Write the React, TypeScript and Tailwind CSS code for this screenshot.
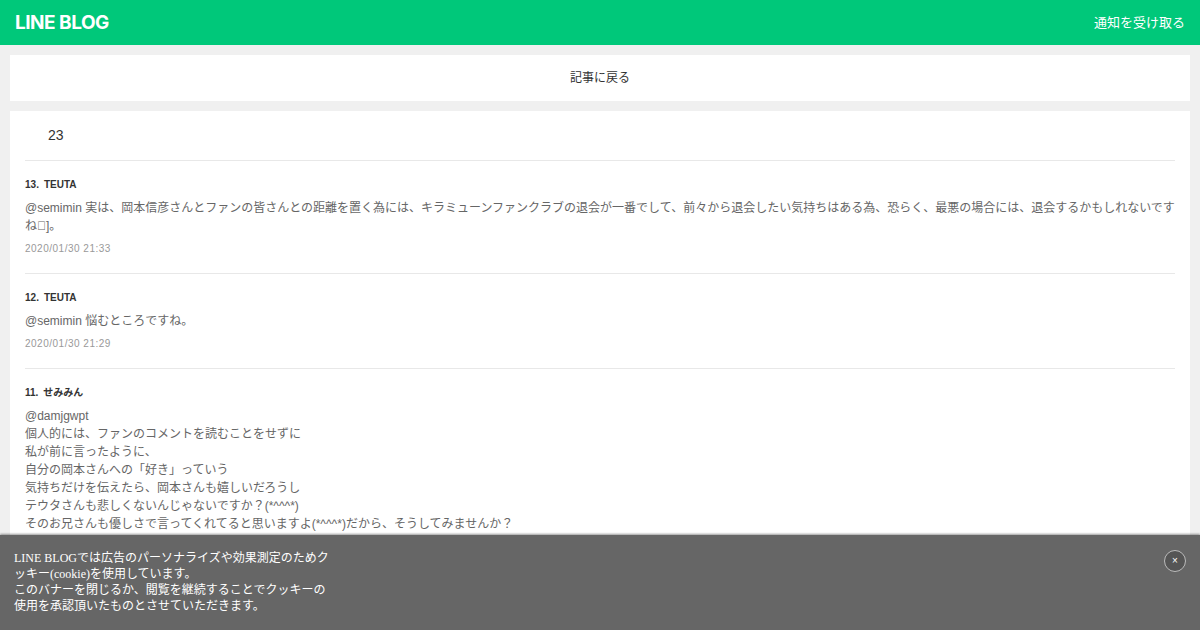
const comments = [
  {
    no: 13,
    name: "TEUTA",
    lines: ["@semimin 実は、岡本信彦さんとファンの皆さんとの距離を置く為には、キラミューンファンクラブの退会が一番でして、前々から退会したい気持ちはある為、恐らく、最悪の場合には、退会するかもしれないですね\u{F0000}]。"],
    date: "2020/01/30 21:33",
  },
  {
    no: 12,
    name: "TEUTA",
    lines: ["@semimin 悩むところですね。"],
    date: "2020/01/30 21:29",
  },
  {
    no: 11,
    name: "せみみん",
    lines: [
      "@damjgwpt",
      "個人的には、ファンのコメントを読むことをせずに",
      "私が前に言ったように、",
      "自分の岡本さんへの「好き」っていう",
      "気持ちだけを伝えたら、岡本さんも嬉しいだろうし",
      "テウタさんも悲しくないんじゃないですか？(*^^^*)",
      "そのお兄さんも優しさで言ってくれてると思いますよ(*^^^*)だから、そうしてみませんか？",
    ],
    date: "2020/01/30 21:20",
  },
];

function Comment({ no, name, lines, date }: { no: number; name: string; lines: string[]; date: string }) {
  return (
    <li className="border-t border-[#e8e8e8] pt-[18px] pb-[18px]">
      <p className="text-[10px] leading-[12px] font-bold text-[#333]">
        <span className="mr-[5px]">{no}.</span>
        {name}
      </p>
      <div className="mt-[8px] text-[12px] leading-[18px] text-[#666]">
        {lines.map((line) => (
          <p key={line}>{line}</p>
        ))}
      </div>
      <p className="mt-[8px] text-[10px] leading-[12px] tracking-[0.5px] text-[#999]">{date}</p>
    </li>
  );
}

export default function App() {
  return (
    <div className="relative h-[630px] overflow-hidden bg-[#f0f0f0] font-['Liberation_Sans','Noto_Sans_CJK_JP',sans-serif]">
      <header className="flex h-[45px] items-center justify-between bg-[#00c87a] pl-[15px] pr-[15px] text-white">
        <span className="font-['Inter',sans-serif] text-[19px] leading-none font-bold tracking-[-0.5px]">LINE BLOG</span>
        <a className="text-[13px]">通知を受け取る</a>
      </header>
      <main className="flex flex-col gap-[10px] px-[10px] pt-[10px]">
        <a className="flex h-[46px] items-center justify-center bg-white text-[12px] text-[#333]">記事に戻る</a>
        <section className="bg-white px-[15px]">
          <div className="flex h-[49px] items-center pl-[23px] text-[14px] text-[#333]">23</div>
          <ul>
            {comments.map((c) => (
              <Comment key={c.no} {...c} />
            ))}
          </ul>
        </section>
      </main>
      <div className="absolute inset-x-0 bottom-0 flex h-[95px] items-start justify-between bg-[#666] pt-[15px] pl-[14px] pr-[14px] shadow-[0_-1px_2px_rgba(0,0,0,0.4)]">
        <p className="w-[320px] font-['Liberation_Serif','Noto_Sans_CJK_JP',serif] text-[12px] leading-[16px] text-white">
          LINE BLOGでは広告のパーソナライズや効果測定のためクッキー(cookie)を使用しています。
          <br />
          このバナーを閉じるか、閲覧を継続することでクッキーの使用を承認頂いたものとさせていただきます。
        </p>
        <button className="flex h-[22px] w-[22px] items-center justify-center rounded-full border border-[#bbb] bg-[#555] text-[10px] leading-none text-white">
          ×
        </button>
      </div>
    </div>
  );
}
